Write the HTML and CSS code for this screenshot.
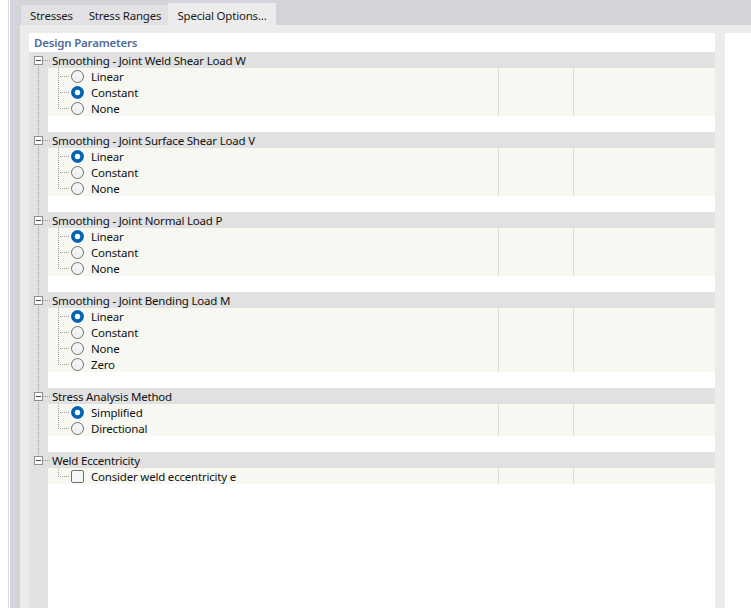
FILE: index.html
```html
<!DOCTYPE html>
<html lang="en">
<head>
<meta charset="utf-8">
<title>Design Parameters</title>
<link rel="stylesheet" href="styles.css">
</head>
<body>
<div class="window">
  <div class="edge"></div>
  <div class="frame">
    <div class="tabs">
      <div class="tab t-stress">Stresses</div>
      <div class="tab t-ranges">Stress Ranges</div>
      <div class="tab t-special active">Special Options...</div>
    </div>
    <div class="page">
      <div class="panel">
        <div class="title">Design Parameters</div>
        <div class="tree">

          <div class="group first">
            <div class="head"><span class="twig"><span class="toggle"></span></span><span class="head-label">Smoothing - Joint Weld Shear Load W</span></div>
            <div class="item"><span class="cell main"><span class="branch"></span><span class="radio"></span><span class="label">Linear</span></span><span class="cell mid"></span><span class="cell end"></span></div>
            <div class="item"><span class="cell main"><span class="branch"></span><span class="radio on"></span><span class="label">Constant</span></span><span class="cell mid"></span><span class="cell end"></span></div>
            <div class="item last"><span class="cell main"><span class="branch"></span><span class="radio"></span><span class="label">None</span></span><span class="cell mid"></span><span class="cell end"></span></div>
            <div class="spacer"></div>
          </div>

          <div class="group">
            <div class="head"><span class="twig"><span class="toggle"></span></span><span class="head-label">Smoothing - Joint Surface Shear Load V</span></div>
            <div class="item"><span class="cell main"><span class="branch"></span><span class="radio on"></span><span class="label">Linear</span></span><span class="cell mid"></span><span class="cell end"></span></div>
            <div class="item"><span class="cell main"><span class="branch"></span><span class="radio"></span><span class="label">Constant</span></span><span class="cell mid"></span><span class="cell end"></span></div>
            <div class="item last"><span class="cell main"><span class="branch"></span><span class="radio"></span><span class="label">None</span></span><span class="cell mid"></span><span class="cell end"></span></div>
            <div class="spacer"></div>
          </div>

          <div class="group">
            <div class="head"><span class="twig"><span class="toggle"></span></span><span class="head-label">Smoothing - Joint Normal Load P</span></div>
            <div class="item"><span class="cell main"><span class="branch"></span><span class="radio on"></span><span class="label">Linear</span></span><span class="cell mid"></span><span class="cell end"></span></div>
            <div class="item"><span class="cell main"><span class="branch"></span><span class="radio"></span><span class="label">Constant</span></span><span class="cell mid"></span><span class="cell end"></span></div>
            <div class="item last"><span class="cell main"><span class="branch"></span><span class="radio"></span><span class="label">None</span></span><span class="cell mid"></span><span class="cell end"></span></div>
            <div class="spacer"></div>
          </div>

          <div class="group">
            <div class="head"><span class="twig"><span class="toggle"></span></span><span class="head-label">Smoothing - Joint Bending Load M</span></div>
            <div class="item"><span class="cell main"><span class="branch"></span><span class="radio on"></span><span class="label">Linear</span></span><span class="cell mid"></span><span class="cell end"></span></div>
            <div class="item"><span class="cell main"><span class="branch"></span><span class="radio"></span><span class="label">Constant</span></span><span class="cell mid"></span><span class="cell end"></span></div>
            <div class="item"><span class="cell main"><span class="branch"></span><span class="radio"></span><span class="label">None</span></span><span class="cell mid"></span><span class="cell end"></span></div>
            <div class="item last"><span class="cell main"><span class="branch"></span><span class="radio"></span><span class="label">Zero</span></span><span class="cell mid"></span><span class="cell end"></span></div>
            <div class="spacer"></div>
          </div>

          <div class="group">
            <div class="head"><span class="twig"><span class="toggle"></span></span><span class="head-label">Stress Analysis Method</span></div>
            <div class="item"><span class="cell main"><span class="branch"></span><span class="radio on"></span><span class="label">Simplified</span></span><span class="cell mid"></span><span class="cell end"></span></div>
            <div class="item last"><span class="cell main"><span class="branch"></span><span class="radio"></span><span class="label">Directional</span></span><span class="cell mid"></span><span class="cell end"></span></div>
            <div class="spacer"></div>
          </div>

          <div class="group last">
            <div class="head"><span class="twig"><span class="toggle"></span></span><span class="head-label">Weld Eccentricity</span></div>
            <div class="item last"><span class="cell main"><span class="branch"></span><span class="check"></span><span class="label">Consider weld eccentricity e</span></span><span class="cell mid"></span><span class="cell end"></span></div>
          </div>

        </div>
      </div>
      <div class="split"></div>
      <div class="side"></div>
    </div>
  </div>
</div>
</body>
</html>
```

FILE: styles.css
```css
* {
  box-sizing: border-box;
}

html, body {
  margin: 0;
  padding: 0;
  background: #ffffff;
}

body {
  font-family: "Noto Sans", "Open Sans", sans-serif;
  font-size: 11.5px;
  letter-spacing: -0.2px;
  color: #1a1a1a;
}

.window {
  display: flex;
  width: 751px;
  height: 608px;
  overflow: hidden;
}

/* outer window edge: white, hairline, white */
.edge {
  width: 10px;
  flex: none;
  background: linear-gradient(to right, #ffffff 8px, #d9d9d9 8px, #d9d9d9 9px, #ffffff 9px);
}

.frame {
  flex: 1;
  display: flex;
  flex-direction: column;
  background: #d4d4da;
}

/* tab strip */
.tabs {
  height: 25px;
  flex: none;
  display: flex;
  align-items: flex-end;
  padding-left: 11px;
}

.tab {
  height: 20px;
  padding-top: 1px;
  display: flex;
  align-items: center;
  justify-content: center;
  background: #e2e2e4;
  color: #1a1a1a;
  white-space: nowrap;
}

.t-stress {
  width: 61px;
}

.t-ranges {
  width: 86px;
}

.t-special {
  width: 108px;
}

.tab.active {
  height: 22px;
  padding-top: 3px;
  background: #ececec;
}

/* tab page */
.page {
  flex: 1;
  display: flex;
  margin-left: 10px;
  padding: 8px 0 0 9px;
  background: #ececec;
}

.panel {
  width: 686px;
  flex: none;
  display: flex;
  flex-direction: column;
  background: #ffffff;
  padding-top: 1px;
}

.split {
  width: 10px;
  flex: none;
}

.side {
  flex: 1;
  background: #ffffff;
}

.title {
  height: 18px;
  line-height: 18px;
  padding-left: 5px;
  font-weight: 600;
  color: #4f6c98;
}

/* tree body: grey gutter on the left */
.tree {
  flex: 1;
  background: linear-gradient(to right, #e1e1e1 19px, #ffffff 19px);
}

/* dotted connector running down the gutter between top-level nodes */
.group {
  background-image: repeating-linear-gradient(to bottom, #9a9a9a 0, #9a9a9a 1px, transparent 1px, transparent 2px);
  background-size: 1px 100%;
  background-position: 9px 0;
  background-repeat: no-repeat;
}

.group.last {
  background: none;
}

.head {
  height: 16px;
  display: flex;
  align-items: center;
  background: #e1e1e1;
}

.twig {
  width: 23px;
  height: 16px;
  flex: none;
  display: flex;
  align-items: center;
  padding-left: 5px;
  background-image:
    repeating-linear-gradient(to right, #9a9a9a 0, #9a9a9a 1px, transparent 1px, transparent 2px),
    repeating-linear-gradient(to bottom, #9a9a9a 0, #9a9a9a 1px, transparent 1px, transparent 2px);
  background-size: 8px 1px, 1px 16px;
  background-position: 14px 8px, 9px 0;
  background-repeat: no-repeat;
}

.group.first .twig {
  background-size: 8px 1px, 1px 8px;
  background-position: 14px 8px, 9px 8px;
}

.group.last .twig {
  background-size: 8px 1px, 1px 8px;
  background-position: 14px 8px, 9px 0;
}

/* expand/collapse box with a minus sign */
.toggle {
  width: 9px;
  height: 9px;
  border: 1px solid #8e8e8e;
  background: linear-gradient(#3a3a3a, #3a3a3a) center / 5px 1px no-repeat, #ffffff;
}

.head-label {
  padding-top: 1px;
  white-space: nowrap;
  color: #111111;
}

.item {
  height: 16px;
  margin-left: 19px;
  display: flex;
  background: #f7f8f2;
}

.cell {
  height: 16px;
}

.cell.main {
  width: 450px;
  display: flex;
  align-items: center;
}

.cell.mid {
  width: 75px;
  border-left: 1px solid #dcdcd4;
}

.cell.end {
  flex: 1;
  border-left: 1px solid #dcdcd4;
}

/* dotted branch from the child connector to the control */
.branch {
  width: 23px;
  height: 16px;
  flex: none;
  background-image:
    repeating-linear-gradient(to right, #9a9a9a 0, #9a9a9a 1px, transparent 1px, transparent 2px),
    repeating-linear-gradient(to bottom, #9a9a9a 0, #9a9a9a 1px, transparent 1px, transparent 2px);
  background-size: 12px 1px, 1px 16px;
  background-position: 10px 8px, 10px 0;
  background-repeat: no-repeat;
}

.item.last .branch {
  background-size: 12px 1px, 1px 9px;
}

.radio {
  width: 13px;
  height: 13px;
  flex: none;
  border-radius: 50%;
  border: 1px solid #6f6f6f;
  background: #f3f3f3;
}

.radio.on {
  border-color: #0063b1;
  background: radial-gradient(circle, #ffffff 0, #ffffff 2.4px, #0063b1 3.2px);
}

.check {
  width: 13px;
  height: 13px;
  flex: none;
  border-radius: 2px;
  border: 1px solid #6f6f6f;
  background: #f6f6f6;
}

.label {
  margin-left: 7px;
  padding-top: 1px;
  white-space: nowrap;
  color: #111111;
}

.spacer {
  height: 16px;
}
```
